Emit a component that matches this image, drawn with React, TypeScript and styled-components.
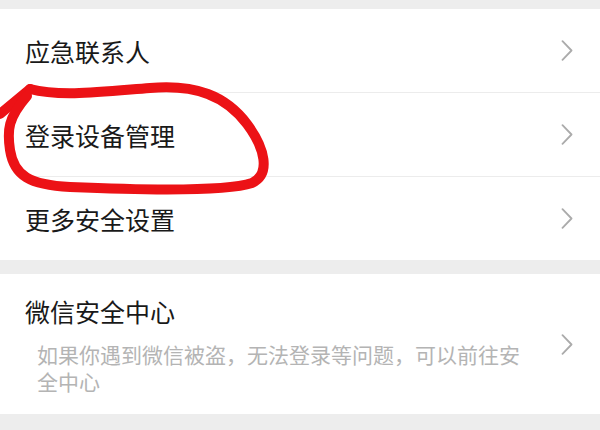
import * as React from 'react'
import styled, { createGlobalStyle } from 'styled-components'

const GlobalStyle = createGlobalStyle`
  html, body {
    margin: 0;
    padding: 0;
    background: #ededed;
  }
  body {
    font-family: "Noto Sans CJK SC", "Noto Sans", sans-serif;
    -webkit-font-smoothing: antialiased;
  }
`

const Page = styled.div`
  position: relative;
  width: 600px;
  height: 430px;
  overflow: hidden;
  background: #ededed;
  padding-top: 9px;
  box-sizing: border-box;
`

const Group = styled.div<{ gapAfter: number }>`
  background: #fff;
  margin-bottom: ${p => p.gapAfter}px;
`

const Row = styled.div<{ divider?: boolean }>`
  position: relative;
  height: 83px;
  display: flex;
  align-items: center;
  justify-content: space-between;
  padding: 0 27px 0 25px;

  ${p =>
    p.divider &&
    `
    margin-bottom: 1px;
    &::after {
      content: '';
      position: absolute;
      left: 24px;
      right: 0;
      bottom: -1px;
      height: 1px;
      background: #ececec;
    }
  `}
`

const Title = styled.span`
  font-size: 25px;
  line-height: 34px;
  color: #191919;
`

const TallRow = styled.div`
  display: flex;
  align-items: center;
  justify-content: space-between;
  padding: 20px 27px 19px 25px;
`

const TextBlock = styled.div`
  display: flex;
  flex-direction: column;
  gap: 13px;
`

const Desc = styled.p`
  margin: 0;
  padding-left: 12px;
  width: 495px;
  font-size: 21px;
  line-height: 27px;
  color: #b4b4b4;
`

const Arrow = styled.svg`
  flex: none;
  width: 12px;
  height: 21px;
`

const Scribble = styled.svg`
  position: absolute;
  left: 0;
  top: 0;
  pointer-events: none;
`

const Chevron = () => (
  <Arrow viewBox="0 0 12 21">
    <path d="M1.5 1.2 L10.5 10.5 L1.5 19.8" fill="none" stroke="#ababab" strokeWidth="1.8" strokeLinecap="round" strokeLinejoin="round" />
  </Arrow>
)

const items = ['应急联系人', '登录设备管理', '更多安全设置']

export default function App() {
  return (
    <>
      <GlobalStyle />
      <Page>
        <Group gapAfter={14}>
          {items.map((label, i) => (
            <Row key={label} divider={i < items.length - 1}>
              <Title>{label}</Title>
              <Chevron />
            </Row>
          ))}
        </Group>
        <Group gapAfter={0}>
          <TallRow>
            <TextBlock>
              <Title>微信安全中心</Title>
              <Desc>如果你遇到微信被盗，无法登录等问题，可以前往安全中心</Desc>
            </TextBlock>
            <Chevron />
          </TallRow>
        </Group>

        {/* hand-drawn red circle around the second row */}
        <Scribble width="600" height="430" viewBox="0 0 600 430">
          <g fill="none" stroke="#ec1216" strokeWidth="10" strokeLinecap="round" strokeLinejoin="round">
            <path d="M0 114 L30 89" />
            <path d="M30 89 C60 97 100 92 150 88 C196 84 226 96 247 124 C265 148 271 174 252 183 C225 192 140 190 70 187 C30 185 14 176 10 150 C7 130 8 118 27 96" />
          </g>
        </Scribble>
      </Page>
    </>
  )
}
